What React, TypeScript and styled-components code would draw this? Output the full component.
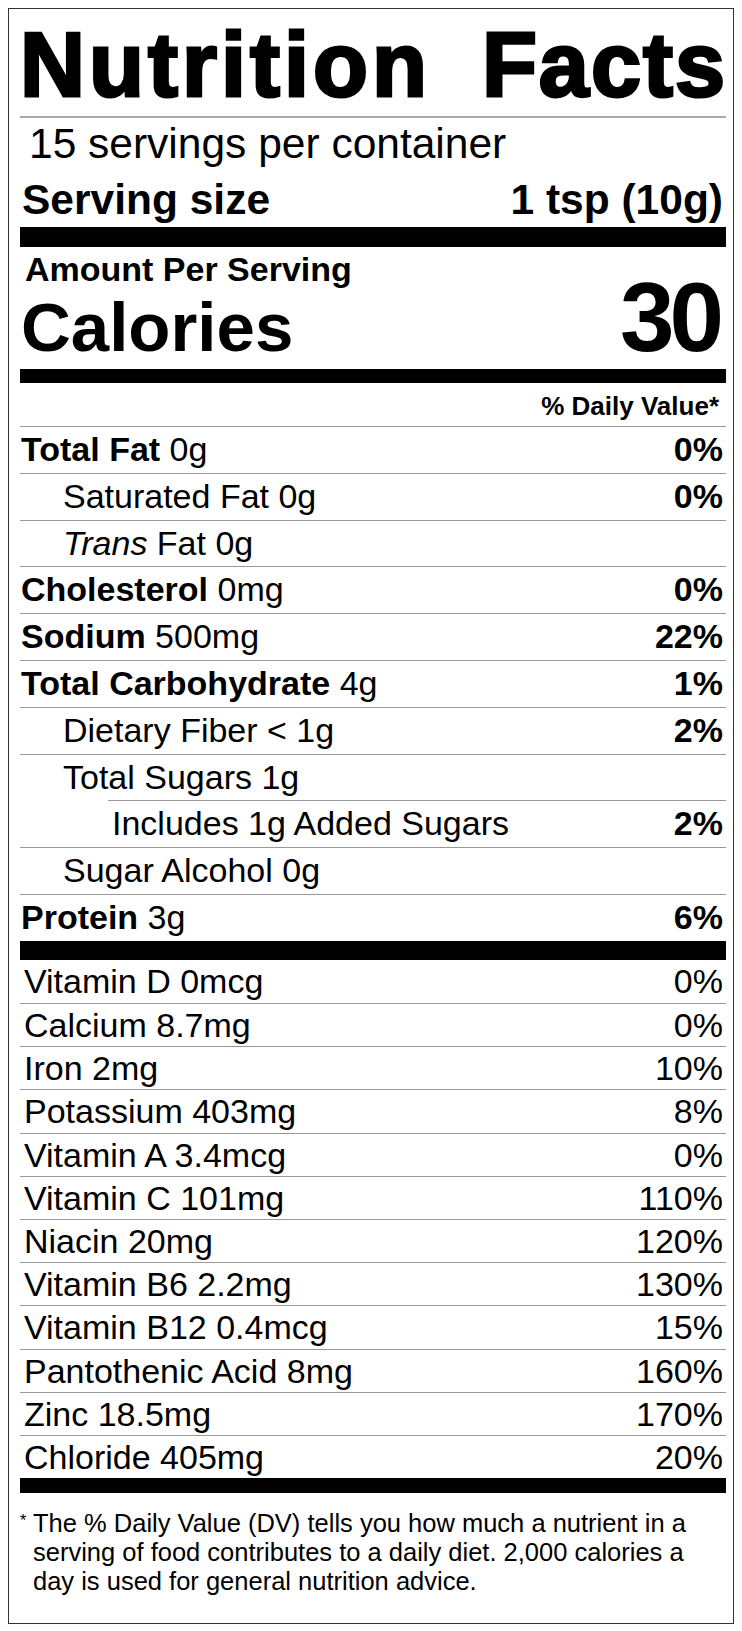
import React from 'react';
import { createGlobalStyle, styled } from 'styled-components';

// Types
interface Nutrient {
  name: React.ReactNode;
  amount?: string;
  dv?: string;
  bold?: boolean;
  level?: 0 | 1 | 2;
}

interface Vitamin {
  name: string;
  dv: string;
}

// Data
const nutrients: Nutrient[] = [
  { name: 'Total Fat', amount: '0g', dv: '0%', bold: true },
  { name: 'Saturated Fat 0g', dv: '0%', level: 1 },
  { name: <><i>Trans</i> Fat 0g</>, level: 1 },
  { name: 'Cholesterol', amount: '0mg', dv: '0%', bold: true },
  { name: 'Sodium', amount: '500mg', dv: '22%', bold: true },
  { name: 'Total Carbohydrate', amount: '4g', dv: '1%', bold: true },
  { name: 'Dietary Fiber < 1g', dv: '2%', level: 1 },
  { name: 'Total Sugars 1g', level: 1 },
  { name: 'Includes 1g Added Sugars', dv: '2%', level: 2 },
  { name: 'Sugar Alcohol 0g', level: 1 },
  { name: 'Protein', amount: '3g', dv: '6%', bold: true },
];

const vitamins: Vitamin[] = [
  { name: 'Vitamin D 0mcg', dv: '0%' },
  { name: 'Calcium 8.7mg', dv: '0%' },
  { name: 'Iron 2mg', dv: '10%' },
  { name: 'Potassium 403mg', dv: '8%' },
  { name: 'Vitamin A 3.4mcg', dv: '0%' },
  { name: 'Vitamin C 101mg', dv: '110%' },
  { name: 'Niacin 20mg', dv: '120%' },
  { name: 'Vitamin B6 2.2mg', dv: '130%' },
  { name: 'Vitamin B12 0.4mcg', dv: '15%' },
  { name: 'Pantothenic Acid 8mg', dv: '160%' },
  { name: 'Zinc 18.5mg', dv: '170%' },
  { name: 'Chloride 405mg', dv: '20%' },
];

// Styled Components
const GlobalStyle = createGlobalStyle`
  body {
    margin: 8px;
    background: #fff;
    color: #000;
    font-family: "Liberation Sans", Arial, Helvetica, sans-serif;
  }
`;

const Label = styled.section`
  border: 1px solid #333;
  padding: 0 7px 0 11px;
`;

const Title = styled.h1`
  margin: 0;
  padding: 12px 0 7px;
  display: flex;
  justify-content: space-between;
  font-size: 90px;
  line-height: 88px;
  font-weight: 700;
  letter-spacing: 4px;
  -webkit-text-stroke: 3px #000;
  border-bottom: 2px solid #aaa;

  span:last-child {
    letter-spacing: 2px;
    margin-right: -1px;
  }
`;

const Servings = styled.div`
  font-size: 42.5px;
  line-height: 46px;
  padding: 3px 0 0 9px;
`;

const ServingSize = styled.div`
  display: flex;
  justify-content: space-between;
  font-size: 42.5px;
  line-height: 46px;
  font-weight: 700;
  margin-top: 10px;
  padding: 0 3px 4px 2px;
`;

const Bar = styled.div<{ $h: number }>`
  height: ${p => p.$h}px;
  background: #000;
`;

const Amount = styled.div`
  font-size: 34px;
  line-height: 36px;
  font-weight: 700;
  padding: 4px 0 0 5px;
`;

const CaloriesRow = styled.div`
  display: flex;
  justify-content: space-between;
  align-items: baseline;
  padding: 0 0 11px 1px;
  font-weight: 700;
`;

const CaloriesLabel = styled.span`
  font-size: 69px;
  line-height: 60px;
`;

const CaloriesValue = styled.span`
  font-size: 98px;
  line-height: 60px;
  letter-spacing: -5px;
  margin-right: 7px;
`;

const DVHeader = styled.div`
  text-align: right;
  font-size: 26px;
  line-height: 30px;
  font-weight: 700;
  padding: 8px 7px 5px 0;
`;

const NutrientRow = styled.div<{ $level: number }>`
  display: flex;
  justify-content: space-between;
  border-top: 1px solid #999;
  font-size: 34px;
  line-height: 45.8px;
  margin-left: ${p => (p.$level === 2 ? 88 : 0)}px;
  padding-left: ${p => (p.$level === 1 ? 43 : p.$level === 2 ? 4 : 1)}px;
  padding-right: 3px;

  b {
    font-weight: 700;
  }
`;

const Percent = styled.b`
  font-weight: 700;
`;

const VitaminRow = styled.div`
  display: flex;
  justify-content: space-between;
  font-size: 34px;
  line-height: 42.2px;
  padding: 0 3px 0 4px;
  border-top: 1px solid #999;

  &:first-child {
    border-top: none;
    line-height: 43.2px;
  }
`;

const Footnote = styled.div`
  display: flex;
  margin-left: -7px;
  padding: 16px 21px 27px 0;
  font-size: 25.5px;
  line-height: 29px;
`;

const Star = styled.span`
  flex: 0 0 20px;
  font-size: 17px;
  line-height: 24px;
  text-align: center;
`;

// Components
export default function App() {
  return (
    <>
      <GlobalStyle />
      <Label>
        <Title>
          <span>Nutrition</span>
          <span>Facts</span>
        </Title>
        <Servings>15 servings per container</Servings>
        <ServingSize>
          <span>Serving size</span>
          <span>1 tsp (10g)</span>
        </ServingSize>
        <Bar $h={20} />
        <Amount>Amount Per Serving</Amount>
        <CaloriesRow>
          <CaloriesLabel>Calories</CaloriesLabel>
          <CaloriesValue>30</CaloriesValue>
        </CaloriesRow>
        <Bar $h={14} />
        <DVHeader>% Daily Value*</DVHeader>
        {nutrients.map((n, i) => (
          <NutrientRow key={i} $level={n.level ?? 0}>
            <span>
              {n.bold ? <b>{n.name}</b> : n.name}
              {n.amount ? ` ${n.amount}` : null}
            </span>
            {n.dv && <Percent>{n.dv}</Percent>}
          </NutrientRow>
        ))}
        <Bar $h={19} />
        <div>
          {vitamins.map(v => (
            <VitaminRow key={v.name}>
              <span>{v.name}</span>
              <span>{v.dv}</span>
            </VitaminRow>
          ))}
        </div>
        <Bar $h={15} />
        <Footnote>
          <Star>*</Star>
          <span>
            The % Daily Value (DV) tells you how much a nutrient in a serving of food
            contributes to a daily diet. 2,000 calories a day is used for general
            nutrition advice.
          </span>
        </Footnote>
      </Label>
    </>
  );
}
